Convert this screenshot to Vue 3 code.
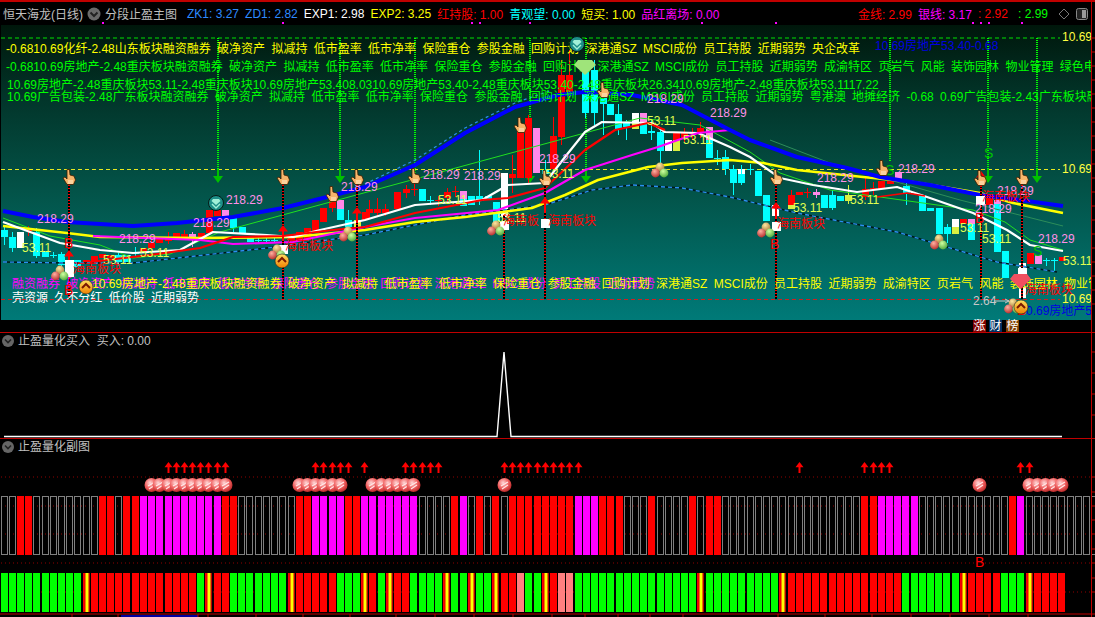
<template>
  <div class="screen">
    <header class="topbar">
      <span class="title">恒天海龙(日线)</span>
      <svg class="round-icon" width="14" height="14" viewBox="0 0 14 14">
        <circle cx="7" cy="7" r="6.5" fill="#6a6a6a" />
        <path d="M3.5 5.5 L7 9 L10.5 5.5" fill="none" stroke="#222" stroke-width="2" />
      </svg>
      <span class="title">分段止盈主图</span>
      <span
        v-for="it in topItems"
        :key="it.text"
        class="top-item"
        :class="it.cls"
      >{{ it.text }}</span>
      <span class="spacer"></span>
      <span v-for="it in rightItems" :key="it.text" class="top-item" :class="it.cls">{{ it.text }}</span>
      <svg class="tool-diamond" width="12" height="12" viewBox="0 0 12 12">
        <path d="M6 1 L11 6 L6 11 L1 6 Z" fill="none" stroke="#777" />
      </svg>
      <svg class="tool-box" width="12" height="12" viewBox="0 0 12 12">
        <rect x="0.5" y="0.5" width="11" height="11" rx="2" fill="#222" stroke="#888" />
        <rect x="6" y="2" width="4" height="8" fill="#999" />
      </svg>
      <i v-for="x in tickMarks" :key="x" class="pink-tick" :style="{ left: x + 'px' }"></i>
    </header>

    <section class="main-panel">
      <svg width="1095" height="307" viewBox="0 25 1095 307">
        <defs>
          <linearGradient id="bg" x1="0" y1="0" x2="0" y2="1">
            <stop offset="0" stop-color="#00170b" />
            <stop offset="0.25" stop-color="#02352a" />
            <stop offset="0.55" stop-color="#035247" />
            <stop offset="1" stop-color="#007a78" />
          </linearGradient>
          <radialGradient id="fr" cx="0.4" cy="0.3" r="0.8">
            <stop offset="0" stop-color="#ffb0a0" /><stop offset="1" stop-color="#b02020" />
          </radialGradient>
          <radialGradient id="fg" cx="0.4" cy="0.3" r="0.8">
            <stop offset="0" stop-color="#d0ffa0" /><stop offset="1" stop-color="#40a030" />
          </radialGradient>
          <radialGradient id="fy" cx="0.4" cy="0.3" r="0.8">
            <stop offset="0" stop-color="#ffe8a0" /><stop offset="1" stop-color="#a07030" />
          </radialGradient>
          <linearGradient id="coin" x1="0" y1="0" x2="0" y2="1">
            <stop offset="0" stop-color="#ffe060" /><stop offset="1" stop-color="#f08000" />
          </linearGradient>
          <symbol id="hand" viewBox="0 0 14 16" overflow="visible">
            <path d="M5 0.5 L7.5 0.5 L8 6 L12 7 L13.5 11 L11.5 15.5 L5 15.5 L1 9 L3 8 L5 10 Z" fill="#f7b56a" stroke="#3a1c00" stroke-width="0.8" />
            <path d="M6 12 L11 12 M6 14 L11 14" stroke="#fff0d0" stroke-width="1" />
          </symbol>
          <symbol id="fruit" viewBox="0 0 18 16" overflow="visible">
            <circle cx="9" cy="5" r="4.4" fill="url(#fy)" />
            <circle cx="4.5" cy="11" r="4.4" fill="url(#fr)" />
            <circle cx="13" cy="11" r="4.4" fill="url(#fg)" />
          </symbol>
          <symbol id="coinup" viewBox="0 0 14 14" overflow="visible">
            <circle cx="7" cy="7" r="7" fill="url(#coin)" stroke="#222" stroke-width="0.6" />
            <path d="M3 8 L7 4 L11 8" fill="none" stroke="#7a1800" stroke-width="2" />
          </symbol>
          <symbol id="gem" viewBox="0 0 16 16" overflow="visible">
            <circle cx="8" cy="8" r="7.5" fill="#1d8f88" stroke="#061a16" />
            <path d="M3.5 6 L8 10 L12.5 6 L11 4 L5 4 Z" fill="#a0f0d8" />
            <path d="M4 9 L8 13 L12 9" fill="none" stroke="#a0f0d8" stroke-width="1.4" />
          </symbol>
          <clipPath id="plot"><rect x="1" y="25" width="1090" height="295" /></clipPath>
        </defs>

        <rect x="1" y="25" width="1090" height="295" fill="url(#bg)" />

        <g clip-path="url(#plot)">
          <line x1="1" y1="38" x2="1060" y2="38" class="dash" stroke="#00e000" />
          <line x1="1" y1="169.5" x2="1060" y2="169.5" class="dash" stroke="#e8e820" />
          <line x1="1" y1="299.5" x2="1060" y2="299.5" class="dash" stroke="#d02020" />

          <g v-for="g in greenDrops" :key="g.x">
            <line :x1="g.x" y1="38" :x2="g.x" :y2="g.tip - 8" stroke="#00ff00" stroke-width="2" stroke-dasharray="1 1" />
            <path v-if="g.arrow" :d="arrowDown(g.x, g.tip)" fill="#00c000" />
          </g>

          <g v-for="(c, n) in candles" :key="n">
            <line v-if="c[4]" :x1="c[0] + 0.5" :y1="c[4]" :x2="c[0] + 0.5" :y2="c[5]" :stroke="c[3]" />
            <rect :x="c[0] - 3" :y="c[1]" width="7" :height="Math.max(c[2] - c[1], 1)" :fill="c[3]" />
          </g>

          <polyline :points="lineDark" class="ma" stroke="#2d8d5a" stroke-width="1" />
          <polyline :points="lineThinGreen" class="ma" stroke="#20e020" stroke-width="1" />
          <polyline :points="lineLowA" class="ma" stroke="#001818" stroke-width="1.4" />
          <polyline :points="lineLowA" class="ma" stroke="#2a90f0" stroke-width="1.4" stroke-dasharray="4 3" />
          <polyline :points="lineHighA" class="ma" stroke="#2a90f0" stroke-width="1.2" stroke-dasharray="3 3" />
          <polyline :points="lineYellow" class="ma" stroke="#ffff00" stroke-width="2.6" />
          <polyline :points="lineWhite" class="ma" stroke="#ffffff" stroke-width="2.2" />
          <polyline :points="lineMagenta" class="ma" stroke="#ff00ff" stroke-width="2.2" />
          <polyline :points="lineRed" class="ma" stroke="#ff0000" stroke-width="2.2" />
          <polyline :points="lineRed2" class="ma" stroke="#ff0000" stroke-width="1.6" />
          <polyline :points="lineBlue" class="ma" stroke="#0000ff" stroke-width="4" />

          <g v-for="d in redDrops" :key="d.x">
            <line :x1="d.x" :y1="d.y" :x2="d.x" y2="299" stroke="#000" stroke-width="2" />
            <line :x1="d.x" :y1="d.y" :x2="d.x" y2="299" stroke="#ff0000" stroke-width="2" stroke-dasharray="1 2" />
          </g>
          <path v-for="a in redArrows" :key="a[0]" :d="arrowUp(a[0], a[1], 10, 16)" fill="#ff0000" />
          <rect v-for="(w, n) in whiteBlocks" :key="n" :x="w[0] - 4" :y="w[1]" width="9" :height="w[2]" fill="#ffffff" />

          <text v-for="(t, n) in textRows" :key="n" :x="t.x" :y="t.y" :fill="t.fill" class="row-text" :style="{ wordSpacing: t.gap + 'px' }">{{ t.text }}</text>

          <text v-for="(p, n) in pinkLabels" :key="n" :x="p[0]" :y="p[1]" class="pink-label">218.29</text>
          <text v-for="(p, n) in limeLabels" :key="n" :x="p[0]" :y="p[1]" class="lime-label">53.11</text>
          <text v-for="(p, n) in sectorLabels" :key="n" :x="p[0]" :y="p[1]" class="sector-label">{{ p[2] || '海南板块' }}</text>
          <text v-for="(p, n) in bMarks" :key="n" :x="p[0]" :y="p[1]" class="b-label">B</text>
          <text x="984" y="158" class="s-label">S</text>
          <text x="885" y="175" class="s-label">S</text>
          <text x="1033" y="256" class="s-label">S</text>
          <text x="973" y="305" class="price-low">2.64</text>
          <path d="M994 301 L1009 301 M1005 299 L1009 301 L1005 303" fill="none" stroke="#c8c8c8" />
          <text x="1026" y="315" class="blue-label">0.69房地产53</text>
          <text x="875" y="50" class="blue-label">10.69房地产53.40-0.68</text>

          <use v-for="(f, n) in fruits" :key="n" href="#fruit" :x="f[0] - 9" :y="f[1] - 8" width="18" height="16" />
          <use href="#coinup" x="79" y="280" width="14" height="14" />
          <use href="#coinup" x="275" y="254" width="14" height="14" />
          <use href="#coinup" x="1014" y="300" width="14" height="14" />
          <use href="#gem" x="208" y="195" width="16" height="16" />
          <use href="#gem" x="569" y="36" width="16" height="16" />
          <path d="M578 60 L592 60 L596 65 L585 75 L574 65 Z" fill="#9fe47a" />
          <path d="M1014 274 L1027 274 L1031 279 L1020.5 289 L1010 279 Z" fill="#f05060" />
          <use v-for="(h, n) in hands" :key="n" href="#hand" :x="h[0] - 7" :y="h[1] - 8" width="14" height="16" />
        </g>

        <text x="1062" y="41" class="axis-label">10.69</text>
        <text x="1062" y="173" class="axis-label">10.69</text>
        <text x="1062" y="303" class="axis-label">10.69</text>

        <g v-for="(b, n) in badges" :key="n">
          <rect :x="b.x" y="320" width="13" height="12" :fill="b.bg" />
          <text :x="b.x + 0.5" y="330" class="badge-text">{{ b.text }}</text>
        </g>
        <line v-for="y in mainTicks" :key="y" x1="1092" :y1="y" x2="1095" :y2="y" stroke="#c00000" />
      </svg>
    </section>

    <section class="buy-panel">
      <svg width="1095" height="105" viewBox="0 333 1095 105">
        <circle cx="8" cy="341" r="6" fill="#666" />
        <path d="M5 339.5 L8 342.5 L11 339.5" fill="none" stroke="#222" stroke-width="1.6" />
        <text x="18" y="345" class="panel-title">止盈量化买入&#160;&#160;买入: 0.00</text>
        <polyline points="4,436.5 497,436.5 504,352 511,436.5 1062,436.5" fill="none" stroke="#fff" stroke-width="1.4" />
        <line v-for="y in buyTicks" :key="y" x1="1092" :y1="y" x2="1095" :y2="y" stroke="#c00000" />
      </svg>
    </section>

    <section class="bars-panel">
      <svg width="1095" height="178" viewBox="0 439 1095 178">
        <defs>
          <radialGradient id="ball" cx="0.4" cy="0.35" r="0.75">
            <stop offset="0" stop-color="#ffd8d8" />
            <stop offset="0.5" stop-color="#f06060" />
            <stop offset="1" stop-color="#a81818" />
          </radialGradient>
          <linearGradient id="stripe" x1="0" y1="0" x2="1" y2="0">
            <stop offset="0" stop-color="#ff0000" />
            <stop offset="1" stop-color="#b00000" />
          </linearGradient>
        </defs>
        <circle cx="8" cy="447" r="6" fill="#666" />
        <path d="M5 445.5 L8 448.5 L11 445.5" fill="none" stroke="#222" stroke-width="1.6" />
        <text x="18" y="451" class="panel-title">止盈量化副图</text>

        <line v-for="y in dottedRows" :key="y" x1="1" :y1="y" x2="1091" :y2="y" stroke="#900000" stroke-dasharray="1 3" />

        <path v-for="i in arrowBars" :key="i" :d="arrowUp(barX(i) + 3.5, 462, 8, 11)" fill="#ff0000" />

        <g v-for="i in ballBars" :key="i">
          <circle :cx="barX(i) + 3.5" cy="485" r="7" fill="url(#ball)" />
          <path :d="`M${barX(i)} 486 L${barX(i) + 7} 482 M${barX(i) + 1} 489 L${barX(i) + 7} 485`" stroke="#ffe8e8" stroke-width="1.2" />
        </g>

        <template v-for="(c, i) in rowOne" :key="i">
          <rect v-if="c === 'g'" :x="barX(i) + 0.5" y="496.5" width="6" height="58" fill="none" stroke="#808080" />
          <rect v-else :x="barX(i)" y="496" width="7" height="59" :fill="c === 'r' ? '#ff0000' : '#ff00ff'" />
        </template>

        <template v-for="(c, i) in rowTwo" :key="i">
          <template v-if="c === 'Y'">
            <rect :x="barX(i)" y="573" width="7" height="39" fill="url(#stripe)" />
            <rect :x="barX(i) + 2.5" y="573" width="3" height="39" fill="#ffff00" />
          </template>
          <rect v-else :x="barX(i)" y="573" width="7" height="39" :fill="rowTwoColors[c]" />
        </template>

        <text x="975" y="567" class="b-label">B</text>

        <line x1="0" y1="614" x2="1095" y2="614" stroke="#c00000" />
        <rect x="121" y="615" width="77" height="2" fill="#0000a0" />
        <line v-for="x in timeTicks" :key="x" :x1="x" y1="614" :x2="x" y2="617" stroke="#c00000" />
        <line v-for="y in barTicks" :key="y" x1="1092" :y1="y" x2="1095" :y2="y" stroke="#c00000" />
      </svg>
    </section>

    <i class="axis-line"></i>
  </div>
</template>

<script setup>
const topItems = [
  { text: 'ZK1: 3.27', cls: 'c-blue m1' },
  { text: 'ZD1: 2.82', cls: 'c-blue m2' },
  { text: 'EXP1: 2.98', cls: 'c-white m3' },
  { text: 'EXP2: 3.25', cls: 'c-yellow m3' },
  { text: '红持股: 1.00', cls: 'c-red m3' },
  { text: '青观望: 0.00', cls: 'c-cyan m3' },
  { text: '短买: 1.00', cls: 'c-yellow m3' },
  { text: '品红离场: 0.00', cls: 'c-magenta m3' }
]
const rightItems = [
  { text: '金线: 2.99', cls: 'c-red m3' },
  { text: '银线: 3.17', cls: 'c-magenta m3' },
  { text: ': 2.92', cls: 'c-red m3' },
  { text: ': 2.99', cls: 'c-green m4' }
]
const tickMarks = [102, 282, 471, 479, 529, 701, 775, 972, 980, 988, 1021]

const board = '融资融券 破净资产 拟减持 低市盈率 低市净率 保险重仓 参股金融 回购计划 深港通SZ MSCI成份 员工持股 近期弱势'
const textRows = [
  { x: 6, y: 53, fill: '#ffff00', gap: 3, text: '-0.6810.69化纤-2.48山东板块' + board + ' 央企改革' },
  { x: 6, y: 71, fill: '#00ff00', gap: 3, text: '-0.6810.69房地产-2.48重庆板块' + board + ' 成渝特区 页岩气 风能 装饰园林 物业管理 绿色电力 10.69房地' },
  { x: 7, y: 89, fill: '#00ff00', gap: 0, text: '10.69房地产-2.48重庆板块53.11-2.48重庆板块10.69房地产53.408.0310.69房地产53.40-2.48重庆板块53.40-2.48重庆板块26.3410.69房地产-2.48重庆板块53.1117.22' },
  { x: 7, y: 101, fill: '#00ff00', gap: 3, text: '10.69广告包装-2.48广东板块' + board + ' 粤港澳 地摊经济 -0.68 0.69广告包装-2.43广东板块融资融券' },
  { x: 12, y: 288, fill: '#ff00ff', gap: 3, text: board },
  { x: 92, y: 288, fill: '#ffff00', gap: 3, text: '10.69房地产-2.48重庆板块' + board + ' 成渝特区 页岩气 风能 装饰园林 物业管理 绿色电力' },
  { x: 12, y: 302, fill: '#ffffff', gap: 3, text: '壳资源 久不分红 低价股 近期弱势' }
]

const greenDrops = [
  { x: 218, tip: 183, arrow: true },
  { x: 340, tip: 183, arrow: true },
  { x: 415, tip: 183, arrow: false },
  { x: 530, tip: 183, arrow: true },
  { x: 586, tip: 183, arrow: true },
  { x: 890, tip: 170, arrow: false },
  { x: 988, tip: 183, arrow: true },
  { x: 1037, tip: 183, arrow: true }
]

const C = '#00ffff'
const R = '#ff0000'
const W = '#ffffff'
const P = '#ff88e8'
const Y = '#d8f040'
// x, body top, body bottom, colour, wick top, wick bottom
const candles = [
  [4, 230, 237, C, 225, 245], [12, 237, 248, C, 232, 252], [20, 232, 248, W], [28, 230, 231, R, 226, 236],
  [36, 232, 256, C, 228, 258], [45, 251, 257, C], [53, 255, 256, C, 252, 258], [61, 254, 265, C, 252, 268],
  [69, 260, 277, W], [77, 260, 267, C], [86, 260, 263, R], [94, 256, 262, R], [102, 254, 258, R], [110, 255, 258, R],
  [118, 255, 263, C, 252, 266], [127, 255, 262, C], [135, 253, 254, C, 247, 257], [143, 248, 253, R], [151, 243, 248, R, 240, 250],
  [159, 238, 243, R], [168, 237, 241, R, 232, 244], [176, 233, 239, R], [184, 234, 238, R, 230, 240], [192, 234, 238, P, 232, 247],
  [201, 233, 241, R], [209, 210, 233, R], [217, 210, 216, R], [225, 210, 216, P], [233, 218, 228, C, 216, 232],
  [242, 227, 234, C], [250, 236, 242, C], [258, 240, 241, C, 237, 244], [266, 240, 241, C, 237, 243], [274, 240, 241, C, 237, 243],
  [291, 237, 240, R], [299, 232, 240, R], [307, 228, 240, R], [315, 220, 233, R], [323, 208, 222, R],
  [332, 200, 208, R, 195, 212], [340, 200, 209, P], [340, 209, 220, C], [348, 220, 227, C, 210, 230], [357, 220, 227, Y],
  [365, 212, 220, R], [369, 209, 213, R, 200, 218], [377, 209, 213, R, 198, 216], [385, 209, 213, R, 204, 216],
  [397, 192, 209, R], [406, 189, 193, R, 185, 198], [414, 189, 190, R, 184, 196], [422, 189, 201, C], [430, 200, 201, C, 196, 205],
  [438, 200, 201, R, 196, 206], [447, 192, 198, R, 188, 202], [455, 191, 192, R, 186, 197], [463, 191, 199, P], [463, 199, 206, C],
  [471, 196, 205, C], [479, 196, 200, C, 150, 205], [488, 196, 200, C], [496, 202, 222, C], [504, 173, 217, W],
  [512, 174, 178, R, 155, 193], [520, 128, 178, R], [528, 118, 178, R, 115, 185], [536, 128, 173, P], [545, 170, 174, C, 160, 195],
  [553, 136, 169, R, 117, 175], [561, 75, 137, R, 60, 145], [569, 75, 95, R, 50, 100], [585, 65, 113, C, 60, 118], [594, 70, 113, C, 60, 125],
  [603, 90, 104, C, 85, 135], [610, 104, 115, C], [618, 114, 129, C, 104, 135], [626, 122, 127, C, 120, 140], [635, 113, 122, W], [635, 122, 129, Y],
  [643, 113, 122, P], [643, 122, 134, C], [651, 131, 133, C, 120, 140], [660, 132, 151, C, 130, 170], [668, 140, 151, W],
  [676, 132, 140, R], [676, 140, 151, Y], [684, 132, 138, R, 128, 142], [692, 133, 134, R, 128, 140], [700, 128, 133, R, 122, 138],
  [709, 127, 140, P], [709, 140, 158, C], [717, 158, 159, C, 150, 165], [725, 157, 169, C, 150, 175],
  [733, 169, 183, C, 165, 195], [741, 169, 174, W], [741, 174, 183, C, 165, 185], [750, 169, 170, C, 164, 175], [758, 171, 196, C],
  [766, 195, 221, C], [775, 205, 216, W], [791, 195, 205, R, 190, 209], [791, 205, 209, Y], [799, 192, 195, R], [807, 192, 193, R, 188, 198],
  [816, 192, 195, P, 189, 198], [824, 195, 208, C], [832, 195, 208, C, 190, 210], [840, 196, 201, C], [848, 195, 201, Y, 185, 204],
  [865, 189, 197, R, 178, 200], [873, 188, 189, R, 182, 195], [881, 181, 189, R], [890, 181, 184, R], [898, 172, 179, P], [906, 186, 194, C, 182, 205],
  [922, 196, 211, C], [930, 208, 211, C], [939, 208, 234, C], [947, 227, 234, C, 224, 243], [955, 219, 227, W], [955, 227, 234, Y],
  [963, 219, 224, R], [971, 219, 224, P], [971, 224, 240, C], [980, 197, 205, W], [989, 197, 205, R], [997, 200, 204, P], [997, 204, 252, C],
  [1005, 251, 278, C], [1022, 263, 273, W], [1022, 287, 298, W], [1030, 253, 264, R], [1038, 255, 264, P], [1046, 260, 261, C, 258, 266],
  [1054, 260, 261, C, 258, 272], [1062, 257, 261, R]
]

const pts = (arr) => arr.map((p) => p.join(',')).join(' ')

const lineBlue = pts([[3, 211], [33, 217], [67, 222], [133, 226], [177, 223], [233, 217], [283, 208], [327, 197], [365, 187], [415, 165], [465, 133], [515, 107], [558, 95], [585, 92], [632, 95], [682, 105], [730, 130], [750, 140], [797, 157], [847, 168], [880, 177], [930, 185], [980, 195], [1020, 200], [1063, 206]])
const lineYellow = pts([[3, 226], [67, 233], [100, 237], [200, 238], [293, 237], [365, 230], [415, 222], [465, 217], [532, 208], [565, 195], [598, 180], [648, 167], [682, 163], [730, 160], [763, 163], [797, 170], [863, 177], [913, 182], [980, 193], [1013, 203], [1063, 213]])
const lineMagenta = pts([[93, 236], [200, 240], [233, 244], [293, 242], [365, 227], [415, 218], [498, 210], [545, 193], [585, 170], [632, 155], [658, 147], [698, 133], [730, 130]])
const lineRed = pts([[90, 262], [150, 255], [200, 248], [233, 237], [283, 236], [333, 230], [365, 227], [415, 213], [482, 200], [508, 198], [545, 188], [585, 150], [615, 130], [648, 123], [665, 130]])
const lineRed2 = pts([[877, 197], [907, 193], [925, 196]])
const lineWhite = pts([[3, 222], [60, 243], [100, 250], [133, 253], [180, 250], [213, 232], [267, 235], [293, 237], [320, 230], [365, 220], [415, 205], [482, 200], [508, 185], [545, 183], [565, 157], [585, 132], [602, 122], [652, 123], [665, 132], [698, 133], [730, 147], [750, 157], [780, 178], [813, 185], [857, 192], [897, 187], [930, 198], [973, 213], [1007, 230], [1030, 245], [1063, 251]])
const lineThinGreen = pts([[3, 218], [50, 236], [100, 245], [133, 258], [170, 254], [220, 232], [640, 118], [700, 125], [750, 152], [780, 173], [830, 190], [973, 210], [1005, 222], [1030, 240], [1063, 250]])
const lineDark = pts([[770, 140], [830, 163], [960, 200], [1063, 226]])
const lineLowA = pts([[3, 262], [67, 263], [133, 263], [267, 248], [365, 235], [465, 215], [545, 205], [592, 190], [632, 185], [682, 188], [730, 197], [797, 213], [897, 232], [997, 262], [1057, 272]])
const lineHighA = pts([[365, 184], [415, 160], [465, 128], [515, 103], [552, 90]])

const redDrops = [
  { x: 69, y: 182 }, { x: 283, y: 182 }, { x: 357, y: 182 }, { x: 504, y: 215 },
  { x: 545, y: 185 }, { x: 776, y: 182 }, { x: 981, y: 182 }, { x: 1022, y: 182 }
]
const redArrows = [[69, 250], [283, 225], [357, 207], [545, 197], [776, 202], [981, 171]]
const whiteBlocks = [[69, 260, 17], [283, 245, 9], [504, 221, 9], [545, 219, 9], [776, 222, 9], [980, 196, 9], [1022, 268, 6]]

const pinkLabels = [[37, 223], [226, 204], [193, 227], [119, 243], [341, 191], [423, 179], [464, 180], [539, 163], [710, 117], [647, 103], [817, 182], [898, 173], [997, 195], [1038, 243], [975, 213]]
const limeLabels = [[22, 252], [140, 257], [103, 264], [438, 204], [545, 178], [647, 125], [683, 144], [793, 212], [850, 204], [960, 232], [982, 243], [1063, 265], [497, 222]]
const sectorLabels = [[73, 273], [285, 250], [503, 225, '海南板'], [548, 225], [777, 228], [982, 201], [1025, 294]]
const bMarks = [[64, 248], [64, 295], [770, 249], [975, 223], [1017, 315]]
const fruits = [[60, 273], [277, 252], [348, 234], [496, 228], [660, 170], [766, 230], [939, 242], [1013, 306]]
const hands = [[69, 177], [283, 177], [357, 177], [332, 194], [414, 176], [520, 125], [545, 178], [603, 90], [776, 177], [882, 168], [980, 178], [1022, 177]]
const badges = [
  { x: 973, text: '涨', bg: '#800000' },
  { x: 989, text: '财', bg: '#003060' },
  { x: 1006, text: '榜', bg: '#804000' }
]

function arrowUp(x, y, w, h) {
  const head = w * 0.65
  return `M${x} ${y} L${x + w / 2} ${y + head} L${x + 1} ${y + head} L${x + 1} ${y + h} L${x - 1} ${y + h} L${x - 1} ${y + head} L${x - w / 2} ${y + head} Z`
}
function arrowDown(x, tip) {
  return `M${x} ${tip} L${x + 5} ${tip - 7} L${x + 1} ${tip - 7} L${x + 1} ${tip - 14} L${x - 1} ${tip - 14} L${x - 1} ${tip - 7} L${x - 5} ${tip - 7} Z`
}

// bars sit on an 8.2px pitch, so every fifth gap is one pixel wider
function barX(i) {
  return Math.floor(i * 8.2) + 1
}
function range(a, b) {
  const out = []
  for (let i = a; i <= b; i++) out.push(i)
  return out
}

const arrowBars = [...range(20, 27), ...range(38, 42), 44, ...range(49, 53), ...range(61, 70), 97, ...range(105, 108), 124, 125]
const ballBars = [...range(18, 27), ...range(36, 41), ...range(45, 50), 61, 119, ...range(125, 129)]

const rowOne = 'ggrrggggggggrrgrrmmmmmmmmmmrrgggggggrrmmmmrrmmmmmmmggggrmgrgrgrrrrrrrrmmmrrrgggrggggrgrrgggggggggggggggggrrmmmmmgggggggggggrmggggggggg'
const rowTwo = 'GGGGGGGGGGYRRRRRRRRRRRRRGYRRGGGGGGGYRRRRRGGGYRGYRRGGGGYGGYGGYRRPGGYRPPGGGGGGGGGGGGGGGYGGGGGGGGGYRRRRRRRRRRRRRRGGGGGGGYRRRRGGGYRRRR'
const rowTwoColors = { G: '#00ff00', R: '#ff0000', P: '#ff8080' }

const dottedRows = [477, 506, 534, 563, 592]
const timeTicks = [72, 118, 198, 208, 256, 303, 350, 396, 435, 474, 513, 552, 585, 618, 650, 683, 778, 825, 872, 911, 950, 989, 1028]
const barTicks = [477, 492, 506, 520, 534, 549, 563, 578, 592]
const buyTicks = [352, 373, 394, 415]
const mainTicks = [38, 52, 66, 80, 94, 108, 122, 136, 150, 164, 178, 192, 206, 220, 234, 248, 262, 276, 290, 304]
</script>

<style scoped>
.screen {
  position: relative;
  width: 1095px;
  height: 617px;
  background: #000;
  overflow: hidden;
  display: flex;
  flex-direction: column;
  font-family: "Liberation Sans", "Noto Sans CJK SC", sans-serif;
}
.topbar {
  position: relative;
  height: 23px;
  border-top: 2px solid #c00000;
  box-sizing: content-box;
  display: flex;
  align-items: center;
  padding-left: 3px;
  font-size: 12px;
  white-space: nowrap;
}
.title {
  color: #c0c0c0;
}
.round-icon {
  margin: 0 4px 0 4px;
}
.top-item {
  display: inline-block;
}
.m1 { margin-left: 10px; }
.m2 { margin-left: 6px; }
.m3 { margin-left: 6px; }
.m4 { margin-left: 10px; }
.c-blue { color: #2e8bff; }
.c-white { color: #fff; }
.c-yellow { color: #ffff00; }
.c-red { color: #ff0000; }
.c-cyan { color: #00ffff; }
.c-magenta { color: #ff00ff; }
.c-green { color: #00ff00; }
.spacer {
  flex: 1;
}
.tool-diamond {
  margin-left: 10px;
}
.tool-box {
  margin-left: 6px;
  margin-right: 7px;
}
.pink-tick {
  position: absolute;
  top: 20px;
  width: 2px;
  height: 2px;
  background: #ff00ff;
}
.main-panel {
  height: 307px;
}
.buy-panel {
  height: 105px;
  border-top: 1px solid #c00000;
}
.bars-panel {
  height: 178px;
  border-top: 1px solid #c00000;
}
svg {
  display: block;
}
.axis-line {
  position: absolute;
  top: 2px;
  bottom: 0;
  left: 1091px;
  width: 1px;
  background: #c00000;
}
.dash {
  stroke-dasharray: 4 3;
}
.ma {
  fill: none;
  stroke-linejoin: round;
}
text {
  font-family: "Liberation Sans", "Noto Sans CJK SC", sans-serif;
  font-size: 12px;
}
.row-text {
  white-space: pre;
}
.pink-label {
  fill: #ff90e8;
}
.lime-label {
  fill: #e0ff50;
}
.sector-label,
.b-label {
  fill: #ff0000;
}
.b-label {
  font-size: 14px;
}
.s-label {
  fill: #00c000;
  font-size: 14px;
}
.price-low {
  fill: #c8c8c8;
}
.blue-label {
  fill: #0000e0;
}
.axis-label {
  fill: #ffff40;
}
.badge-text {
  fill: #fff;
}
.panel-title {
  fill: #c0c0c0;
}
</style>

<style>
html, body {
  background: #000;
  margin: 0;
}
</style>
